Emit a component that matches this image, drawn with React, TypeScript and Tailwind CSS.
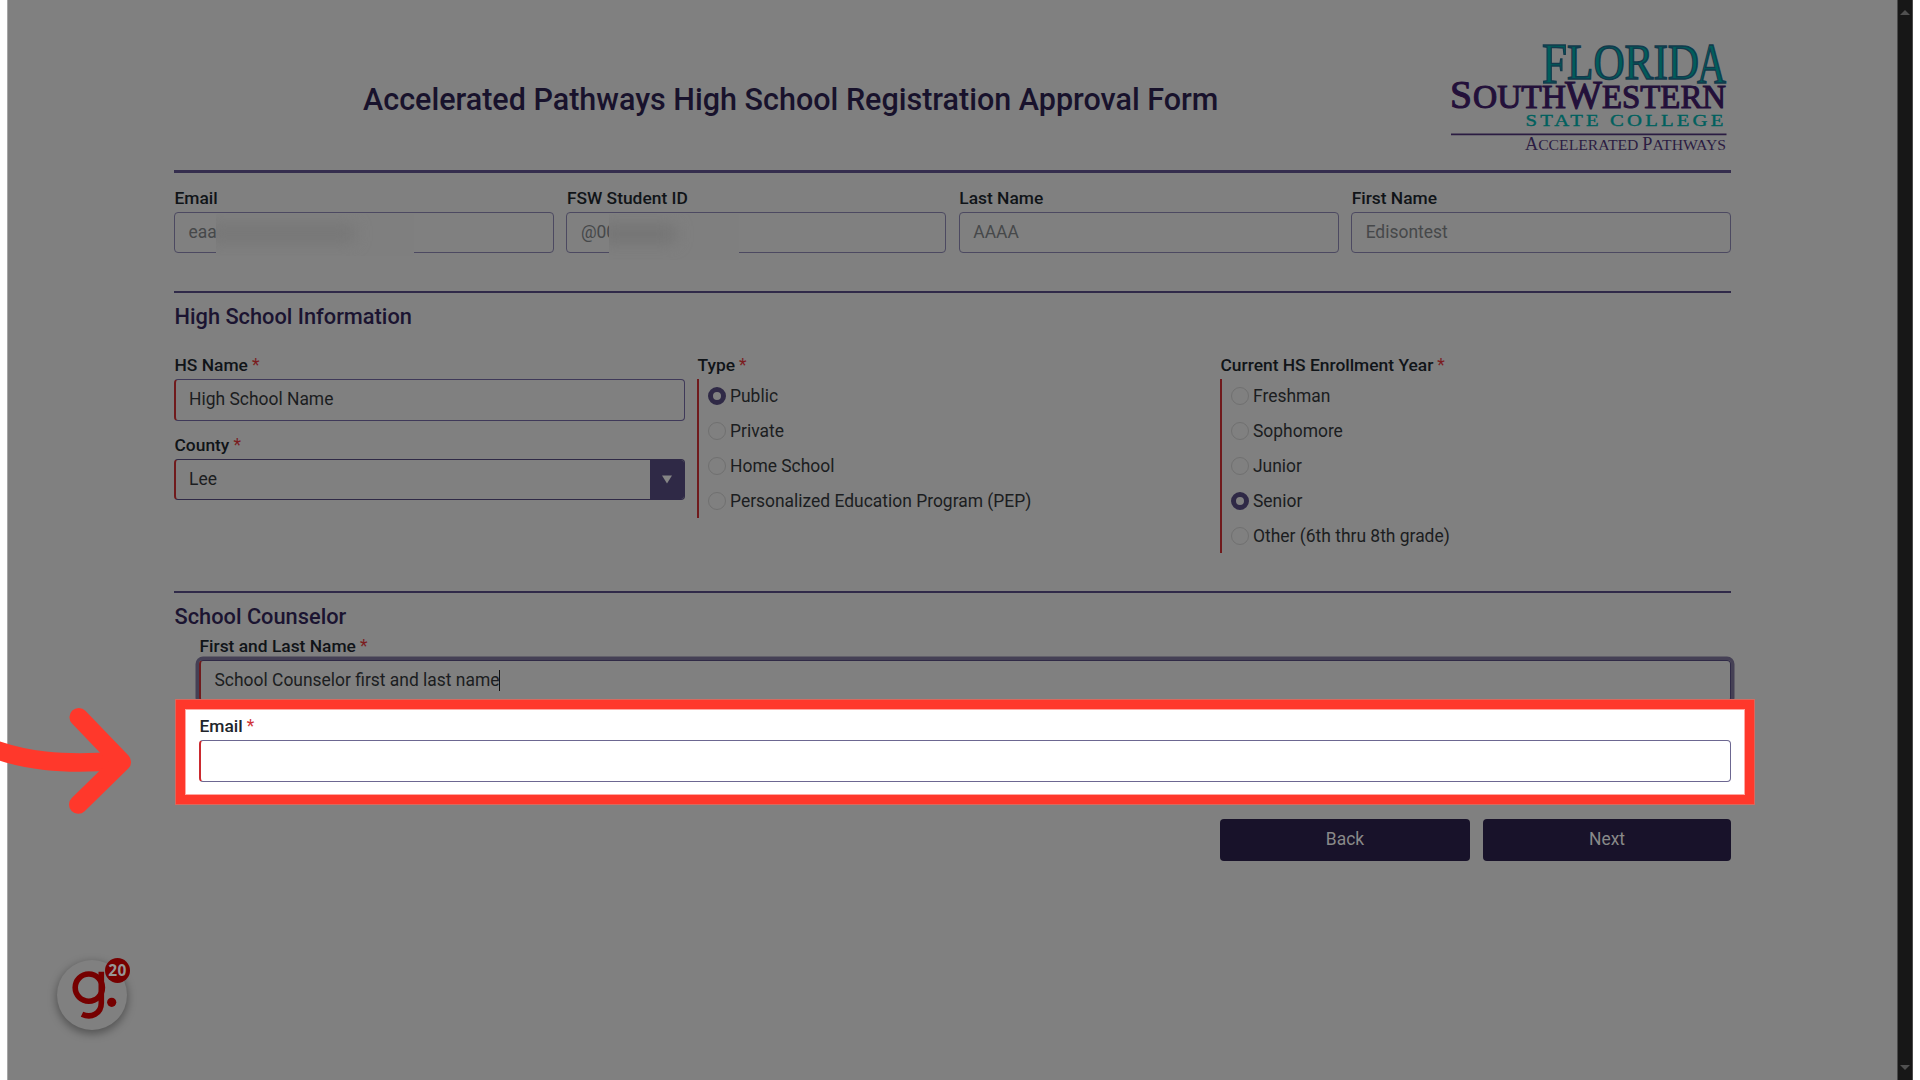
import type { ReactNode } from "react"
import clsx from "clsx"

export default function App() {
  return (
    <div className="relative flex h-[1080px] w-[1920px] overflow-hidden bg-white pl-[7px] font-['Roboto',sans-serif] text-[17.45px] text-[#1b1d20]">
      <main className="h-full w-[1890px] border-l border-[#a6a6a6] bg-[#808080] pl-[166px]">
        <div className="w-[1557px]">
          <Header />
          <StudentInfo />
          <HighSchoolInfo />
          <Counselor />
        </div>
      </main>
      <Scrollbar />

      <Arrow />
      <HelpWidget />
    </div>
  )
}

function Header() {
  return (
    <header className="flex h-[173px] items-start border-b-[3px] border-[#352e4e]">
      <h1 className="w-[1277px] pt-[80px] pl-[189px] text-[30.5px] leading-[39px] font-medium whitespace-nowrap text-[#18122c]">
        Accelerated Pathways High School Registration Approval Form
      </h1>
      <Logo />
    </header>
  )
}

function Logo() {
  return (
    <svg
      className="mt-[36px] h-[120px] w-[280px] shrink-0 font-['Liberation_Serif',serif]"
      viewBox="1451 36 280 120"
    >
      <g fill="#005d5b" stroke="#123a4c" strokeWidth="1.5">
        <text x="1542" y="83" fontSize="57" textLength="25" lengthAdjust="spacingAndGlyphs">
          F
        </text>
        <text x="1567" y="79" fontSize="51" textLength="132" lengthAdjust="spacingAndGlyphs">
          LORID
        </text>
        <text x="1697" y="83" fontSize="57" textLength="29" lengthAdjust="spacingAndGlyphs">
          A
        </text>
      </g>
      <g fill="#23103a" stroke="#23103a" strokeWidth="1.1">
        <text x="1450" y="108" fontSize="40" textLength="22" lengthAdjust="spacingAndGlyphs">
          S
        </text>
        <text x="1473" y="108" fontSize="33" textLength="93" lengthAdjust="spacingAndGlyphs">
          OUTH
        </text>
        <text x="1565" y="108" fontSize="40" textLength="37" lengthAdjust="spacingAndGlyphs">
          W
        </text>
        <text x="1602" y="108" fontSize="33" textLength="124" lengthAdjust="spacingAndGlyphs">
          ESTERN
        </text>
      </g>
      <text
        x="1525.5"
        y="125.5"
        fontSize="17"
        fill="#00605e"
        stroke="#00605e"
        strokeWidth="0.4"
        textLength="201"
        lengthAdjust="spacingAndGlyphs"
        letterSpacing="2.6"
      >
        STATE COLLEGE
      </text>
      <path d="M1451 134.3H1726.5" stroke="#2b1c42" strokeWidth="1.8" />
      <text x="1525" y="150" fill="#2b1c42" fontSize="15.5" textLength="201" lengthAdjust="spacingAndGlyphs">
        <tspan fontSize="18">A</tspan>CCELERATED <tspan fontSize="18">P</tspan>ATHWAYS
      </text>
    </svg>
  )
}

function Label({
  children,
  required = false,
  bright = false
}: {
  children: ReactNode
  required?: boolean
  bright?: boolean
}) {
  return (
    <div
      className={clsx(
        "h-[23px] pl-[0.5px] leading-[19px] whitespace-nowrap",
        bright ? "text-[#21252b]" : "text-[#101418]"
      )}
    >
      <span className="text-[17.4px] font-medium">{children}</span>
      {required && <span className={clsx("ml-1", bright ? "text-[#d13438]" : "text-[#7b1c1f]")}>*</span>}
    </div>
  )
}

function ReadOnlyField({ label, value, children }: { label: string; value: string; children?: ReactNode }) {
  return (
    <div className="relative">
      <Label>{label}</Label>
      <div className="flex h-[41px] items-center rounded-[4px] border border-[#4c4961] pl-[13.5px] text-[#46484a]">
        {value}
      </div>
      {children}
    </div>
  )
}

function StudentInfo() {
  return (
    <section className="grid h-[120px] grid-cols-4 gap-x-[12.5px] border-b-2 border-[#302a49] pt-[16px]">
      <ReadOnlyField label="Email" value="eaa">
        <div className="absolute top-[25px] left-[42px] h-[42px] w-[198px] overflow-hidden bg-[#7f7f7f]">
          <div className="mt-[12px] -ml-2 h-[15px] w-[146px] bg-[#757575] blur-[8px]" />
        </div>
      </ReadOnlyField>
      <ReadOnlyField label="FSW Student ID" value="@00">
        <div className="absolute top-[25px] left-[43px] h-[46px] w-[130px] overflow-hidden bg-[#7f7f7f]">
          <div className="mt-[12px] -ml-2 h-[16px] w-[74px] bg-[#737373] blur-[8px]" />
        </div>
      </ReadOnlyField>
      <ReadOnlyField label="Last Name" value="AAAA" />
      <ReadOnlyField label="First Name" value="Edisontest" />
    </section>
  )
}

function SectionTitle({ children }: { children: ReactNode }) {
  return (
    <h2 className="pl-[0.5px] text-[21.8px] leading-[26px] font-medium text-[#1b1431]">{children}</h2>
  )
}

function RadioList({ options, selected }: { options: string[]; selected: string }) {
  return (
    <ul className="border-l-2 border-[#701a1c] pl-[9px]">
      {options.map((o) => (
        <li key={o} className="flex h-[34.8px] items-center gap-[4px]">
          <span
            className={clsx(
              "size-[18px] shrink-0 rounded-full",
              o === selected ? "border-[5px] border-[#2f2946]" : "border border-[#707070]"
            )}
          />
          <span className="whitespace-nowrap">{o}</span>
        </li>
      ))}
    </ul>
  )
}

function HighSchoolInfo() {
  return (
    <section className="h-[300px] border-b-2 border-[#302a49] pt-[11px]">
      <SectionTitle>High School Information</SectionTitle>
      <div className="mt-[26px] grid grid-cols-3 gap-x-[12px]">
        <div>
          <Label required>HS Name</Label>
          <div className="flex h-[42px] items-center rounded-[4px] border border-l-2 border-[#3f3959] border-l-[#701a1c] pb-[2px] pl-[13px]">
            High School Name
          </div>
          <div className="mt-[15px]">
            <Label required>County</Label>
          </div>
          <div className="flex h-[41px] items-center justify-between overflow-hidden rounded-[4px] border border-l-2 border-[#2f2946] border-l-[#701a1c] pl-[13px]">
            Lee
            <span className="flex h-full w-[34px] items-center justify-center bg-[#2f2946]">
              <svg className="h-[9px] w-[10px]" viewBox="0 0 10 9">
                <path d="M0 0.5H10L5 8.5Z" fill="#858585" />
              </svg>
            </span>
          </div>
        </div>
        <div>
          <Label required>Type</Label>
          <RadioList
            options={["Public", "Private", "Home School", "Personalized Education Program (PEP)"]}
            selected="Public"
          />
        </div>
        <div>
          <Label required>Current HS Enrollment Year</Label>
          <RadioList
            options={["Freshman", "Sophomore", "Junior", "Senior", "Other (6th thru 8th grade)"]}
            selected="Senior"
          />
        </div>
      </div>
    </section>
  )
}

function Counselor() {
  return (
    <section className="pt-[11px]">
      <SectionTitle>School Counselor</SectionTitle>
      <div className="mt-[7px] pl-[25px]">
        <Label required>First and Last Name</Label>
        <div className="flex h-[42px] items-center rounded-[4px] border border-l-2 border-[#2f2946] border-l-[#701a1c] pb-[2px] pl-[13.5px] shadow-[0_0_0_3.5px_#454055]">
          School Counselor first and last name
          <span className="-ml-px h-[21px] w-px bg-[#101010]" />
        </div>
      </div>
      <HighlightedEmail />
      <div className="mt-[14px] ml-[1046px] grid grid-cols-[250px_248px] gap-x-[13px] text-[#898989]">
        <button className="h-[42px] rounded-[4px] bg-[#18122a] pb-[2px]">Back</button>
        <button className="h-[42px] rounded-[4px] bg-[#18122a] pb-[2px]">Next</button>
      </div>
    </section>
  )
}

// Spotlight box around the current step, it overlaps the field above
function HighlightedEmail() {
  return (
    <div className="relative -mt-[3px] ml-[1px] h-[106px] w-[1580px] border border-[#d8695f] bg-[#ff382b] p-[9px]">
      <div className="h-full border border-[#ffa8a2] bg-white pt-[7px] pr-[13px] pl-[13px]">
        <Label required bright>
          Email
        </Label>
        <div className="h-[42px] rounded-[4px] border border-l-2 border-[#6c6791] border-l-[#cb2a2f]" />
      </div>
    </div>
  )
}

function Arrow() {
  return (
    <svg
      className="absolute top-[700px] left-0 h-[120px] w-[140px]"
      viewBox="0 700 140 120"
      fill="none"
      stroke="#ff382b"
      strokeWidth="18.5"
      strokeLinecap="round"
      strokeLinejoin="round"
    >
      <path d="M-12 747C25 761 60 765 118 761" />
      <path d="M78.7 717.2L121.8 762L78.2 804.6" />
    </svg>
  )
}

function HelpWidget() {
  return (
    <div className="absolute top-[960px] left-[57px] size-[70px] rounded-full bg-[#808080] shadow-[0_3px_8px_1px_rgba(0,0,0,0.35)]">
      <svg className="size-full" viewBox="57 960 70 70" fill="none" stroke="#760000" strokeWidth="5.6">
        <circle cx="88.8" cy="987.6" r="13.6" />
        <path d="M101.3 971.8V1003C101.3 1014 91 1018.5 82 1014.2" />
        <circle cx="111.7" cy="1002.3" r="4.6" fill="#760000" stroke="none" />
      </svg>
      <span className="absolute top-[-2px] left-[48px] flex size-[25px] items-center justify-center rounded-full bg-[#760000] font-['Open_Sans',sans-serif] text-[15.5px] font-bold tracking-[0.3px] text-[#969696]">
        20
      </span>
    </div>
  )
}

function Scrollbar() {
  return (
    <div className="flex h-full w-[16px] flex-col items-center justify-between border-x border-[#4a4a4a] bg-[#171717] py-[10px]">
      <svg className="h-[5px] w-[10px]" viewBox="0 0 10 5">
        <path d="M5 0L10 5H0Z" fill="#505050" />
      </svg>
      <svg className="h-[5px] w-[10px]" viewBox="0 0 10 5">
        <path d="M0 0H10L5 5Z" fill="#505050" />
      </svg>
    </div>
  )
}
